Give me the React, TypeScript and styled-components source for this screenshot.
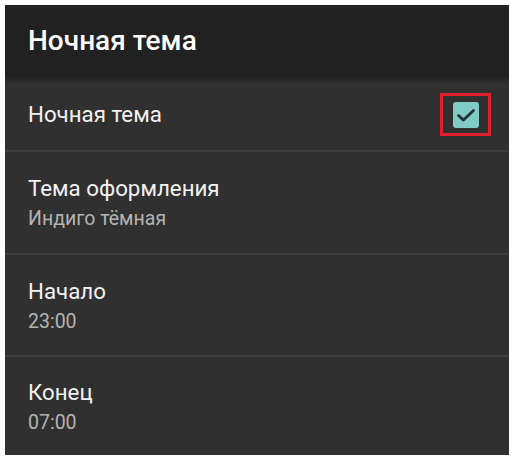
import React from 'react';
import styled, { createGlobalStyle } from 'styled-components';

const GlobalStyle = createGlobalStyle`
  html, body {
    margin: 0;
    padding: 0;
    background: #ffffff;
  }
  body {
    font-family: Roboto, "Liberation Sans", sans-serif;
  }
`;

const Page = styled.div`
  width: 514px;
  height: 460px;
  padding: 5px;
  box-sizing: border-box;
`;

const Screen = styled.div`
  width: 504px;
  height: 450px;
  background: #303030;
  display: flex;
  flex-direction: column;
  overflow: hidden;
`;

const Toolbar = styled.div`
  height: 73px;
  background: #212121;
  display: flex;
  align-items: center;
  padding: 0 23px 2px;
  box-sizing: border-box;
  box-shadow: 0 2px 4px rgba(0, 0, 0, 0.35);
  position: relative;
  z-index: 1;
`;

const ToolbarTitle = styled.h1`
  margin: 0;
  color: #ffffff;
  font-size: 28px;
  font-weight: 500;
`;

const Row = styled.div<{ $height: number }>`
  height: ${(p) => p.$height}px;
  display: flex;
  align-items: center;
  justify-content: space-between;
  padding: 0 18px 0 23px;
  border-bottom: 2px solid #3e3e3e;
  box-sizing: border-box;
  &:last-child {
    border-bottom: none;
  }
`;

const TextBlock = styled.div`
  display: flex;
  flex-direction: column;
  gap: 5px;
`;

const Title = styled.div`
  color: #f2f2f2;
  font-size: 22.3px;
  line-height: 27px;
`;

const Summary = styled.div`
  color: #b4b4b4;
  font-size: 19.5px;
  line-height: 23px;
`;

const Highlight = styled.div`
  width: 51px;
  height: 43px;
  box-sizing: border-box;
  border: 3px solid #e0202a;
  display: flex;
  align-items: center;
  justify-content: center;
  margin-top: 1px;
`;

const Checkbox = styled.div`
  width: 26px;
  height: 26px;
  border-radius: 3px;
  background: #80cbc4;
  display: flex;
  align-items: center;
  justify-content: center;
`;

const Check = () => (
  <svg width="26" height="26" viewBox="0 0 26 26" fill="none">
    <path d="M5.5 13.5l5 4.6L20.5 8.5" stroke="#263238" strokeWidth="2.8" strokeLinecap="round" strokeLinejoin="round" />
  </svg>
);

const prefs = [
  { title: 'Тема оформления', summary: 'Индиго тёмная', height: 103 },
  { title: 'Начало', summary: '23:00', height: 102 },
  { title: 'Конец', summary: '07:00', height: 98 },
];

const App: React.FC = () => {
  return (
    <Page>
      <GlobalStyle />
      <Screen>
        <Toolbar>
          <ToolbarTitle>Ночная тема</ToolbarTitle>
        </Toolbar>
        <Row $height={74}>
          <Title>Ночная тема</Title>
          <Highlight>
            <Checkbox>
              <Check />
            </Checkbox>
          </Highlight>
        </Row>
        {prefs.map((p) => (
          <Row key={p.title} $height={p.height}>
            <TextBlock>
              <Title>{p.title}</Title>
              <Summary>{p.summary}</Summary>
            </TextBlock>
          </Row>
        ))}
      </Screen>
    </Page>
  );
};

export default App;
